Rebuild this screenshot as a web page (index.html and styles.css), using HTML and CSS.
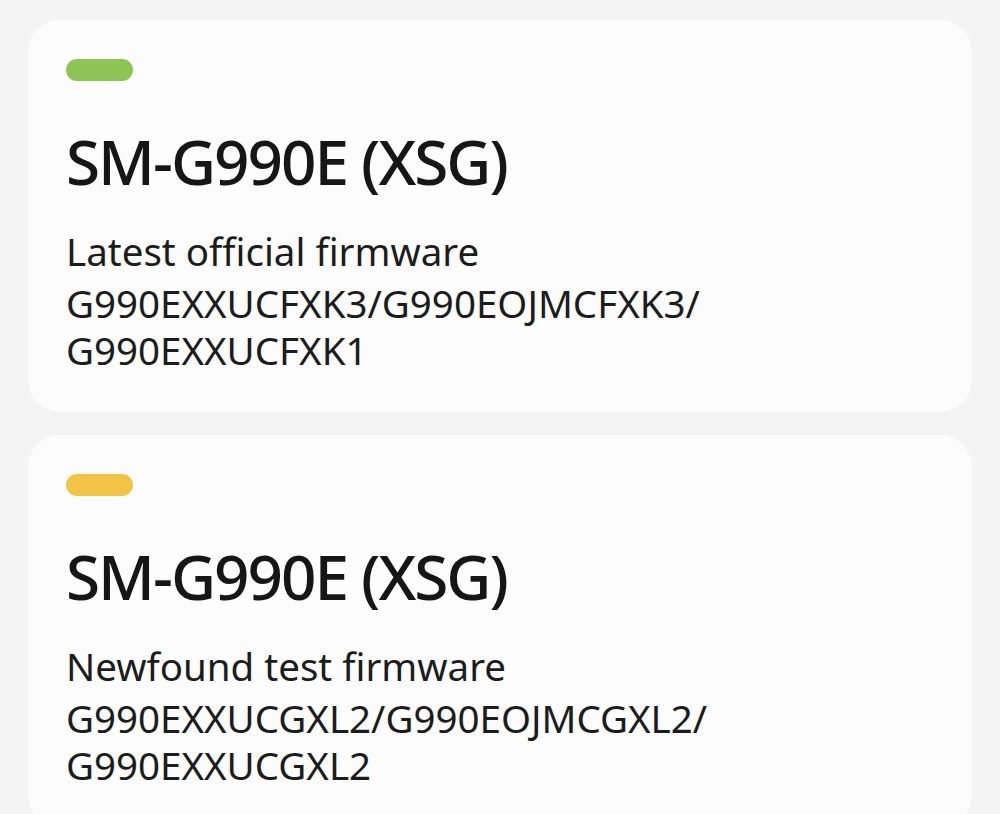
FILE: index.html
```html
<!DOCTYPE html>
<html lang="en">
<head>
<meta charset="utf-8">
<title>Firmware</title>
<link rel="stylesheet" href="styles.css">
</head>
<body>
<main class="list">
  <section class="card">
    <div class="pill pill-green"></div>
    <h1 class="model">SM-G990E (XSG)</h1>
    <p class="label">Latest official firmware</p>
    <p class="fw">G990EXXUCFXK3/G990EOJMCFXK3/<br>G990EXXUCFXK1</p>
  </section>
  <section class="card">
    <div class="pill pill-yellow"></div>
    <h1 class="model">SM-G990E (XSG)</h1>
    <p class="label">Newfound test firmware</p>
    <p class="fw">G990EXXUCGXL2/G990EOJMCGXL2/<br>G990EXXUCGXL2</p>
  </section>
</main>
</body>
</html>
```
FILE: styles.css
```css
html, body {
  margin: 0;
  background: #f4f4f4;
}
body {
  font-family: "Noto Sans", "Open Sans", sans-serif;
  color: #1c1c1c;
}
.list {
  display: flex;
  flex-direction: column;
  gap: 23px;
  padding: 20px 28px;
}
.card {
  background: #fcfcfc;
  border-radius: 32px;
  padding: 39px 38px 38px;
}
.pill {
  width: 67px;
  height: 22px;
  border-radius: 11px;
}
.pill-green { background: #8ec356; }
.pill-yellow { background: #f2c445; }
.model {
  margin: 44px 0 0;
  font-size: 62px;
  font-weight: 500;
  line-height: 72px;
  letter-spacing: -2px;
  color: #161616;
}
.label {
  margin: 31px 0 5px;
  font-size: 38.5px;
  line-height: 47px;
  font-weight: 400;
}
.fw {
  margin: 0;
  font-size: 38.5px;
  line-height: 47px;
  font-weight: 400;
}
```
